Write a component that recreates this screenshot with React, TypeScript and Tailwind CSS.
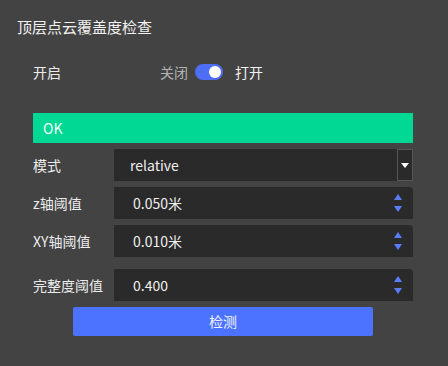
const Spinner = () => (
  <div className="absolute right-[11px] top-0 h-full flex flex-col justify-between py-[7px]">
    <svg width="8" height="6" viewBox="0 0 8 6">
      <polygon points="4,0 8,6 0,6" fill="#5b7cff" />
    </svg>
    <svg width="8" height="6" viewBox="0 0 8 6">
      <polygon points="0,0 8,0 4,6" fill="#5b7cff" />
    </svg>
  </div>
)

const NumberRow = ({ label, value, className = '' }: { label: string; value: string; className?: string }) => (
  <div className={`flex items-center ${className}`}>
    <div className="w-[81px] text-[14px] text-[#ececec]">{label}</div>
    <div className="relative flex-1 h-[32px] bg-[#2a2a2a] rounded-tr-[4px] flex items-center pl-[19px] text-[14px] text-[#f0f0f0]">
      {value}
      <Spinner />
    </div>
  </div>
)

export default function App() {
  return (
    <div className="w-[448px] h-[366px] bg-[#434343] text-white font-['Noto_Sans_CJK_SC','Noto_Sans',sans-serif] flex flex-col">
      <div className="pl-[17px] pt-[16px] text-[15px] leading-[22px] text-[#f2f2f2]">顶层点云覆盖度检查</div>

      <div className="flex flex-col px-[33px] pr-[35px]">
        <div className="mt-[26px] h-[16px] flex items-center text-[14px]">
          <span className="w-[127px] text-[#ececec]">开启</span>
          <span className="text-[#b3b3b3]">关闭</span>
          <div className="ml-[7px] w-[28px] h-[16px] rounded-full bg-[#4d6ef5] flex items-center justify-end pr-[2px]">
            <div className="w-[12px] h-[12px] rounded-full bg-white" />
          </div>
          <span className="ml-[12px] text-[#f2f2f2]">打开</span>
        </div>

        <div className="mt-[33px] h-[30px] bg-[#00d894] flex items-center pl-[10px] text-[14px] text-[#f4fff9]">OK</div>

        <div className="mt-[6px] flex items-center">
          <div className="w-[81px] text-[14px] text-[#ececec]">模式</div>
          <div className="flex-1 h-[32px] bg-[#2a2a2a] flex items-center pl-[16px] text-[14px] text-[#f0f0f0] relative">
            relative
            <div className="absolute right-0 top-0 h-full w-[16px] border border-[#555] bg-[#2a2a2a] flex items-center justify-center">
              <svg width="8" height="5" viewBox="0 0 8 5">
                <polygon points="0,0 8,0 4,5" fill="#ffffff" />
              </svg>
            </div>
          </div>
        </div>

        <NumberRow label="z轴阈值" value="0.050米" className="mt-[6px]" />
        <NumberRow label="XY轴阈值" value="0.010米" className="mt-[6px]" />
        <NumberRow label="完整度阈值" value="0.400" className="mt-[12px]" />

        <button className="mt-[6px] ml-[40px] w-[300px] h-[29px] rounded-[2px] bg-[#4b73ff] text-[14px] text-[#f4f4ff]">检测</button>
      </div>
    </div>
  )
}
